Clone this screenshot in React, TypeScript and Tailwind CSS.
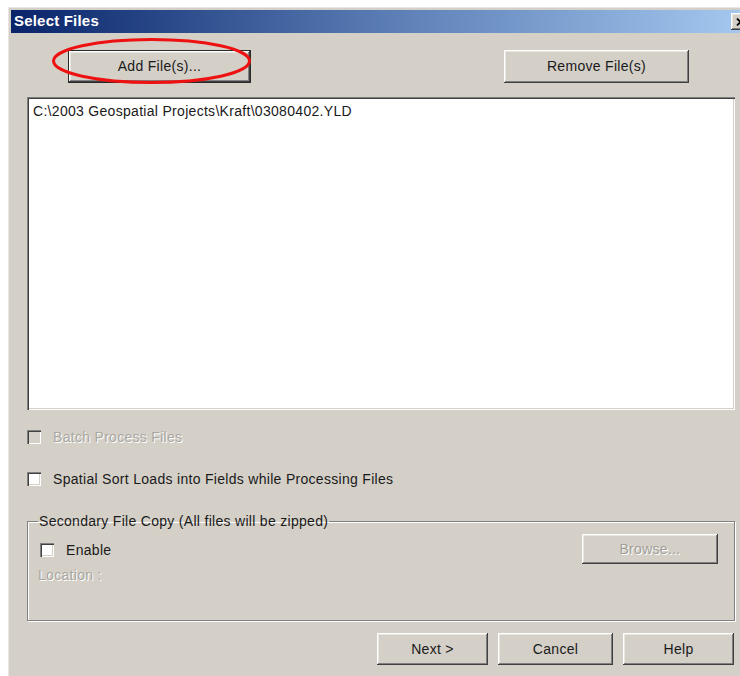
import React from 'react';

const FONT = "font-['Liberation_Sans',Arial,sans-serif]";
const TEXT = 'text-[14px] tracking-[0.3px]';

// classic raised 3D bevel
const RAISED =
  'shadow-[inset_-1px_-1px_#404040,inset_1px_1px_#ffffff,inset_-2px_-2px_#808080,inset_2px_2px_#e8e6e1]';

function Button({
  label,
  className = '',
  disabled = false,
  isDefault = false,
}: {
  label: string;
  className?: string;
  disabled?: boolean;
  isDefault?: boolean;
}) {
  return (
    <div
      className={`flex items-center justify-center bg-[#d4d0c8] ${TEXT} ${
        isDefault ? 'border border-[#2a2a2a]' : ''
      } ${className}`}
    >
      <div
        className={`flex h-full w-full items-center justify-center ${RAISED} ${
          disabled ? 'text-[#a19e98] [text-shadow:1px_1px_0_#ffffff]' : 'text-[#1a1a1a]'
        }`}
      >
        {label}
      </div>
    </div>
  );
}

function Checkbox({ label, disabled = false }: { label: string; disabled?: boolean }) {
  return (
    <div className="flex items-center gap-[12px]">
      <div
        className={`h-[14px] w-[14px] shrink-0 shadow-[inset_1px_1px_#808080,inset_2px_2px_#404040,inset_-1px_-1px_#ffffff,inset_-2px_-2px_#d4d0c8] ${
          disabled ? 'bg-[#d4d0c8]' : 'bg-white'
        }`}
      />
      <span
        className={`${TEXT} leading-none ${
          disabled ? 'text-[#aaa7a1] [text-shadow:1px_1px_0_#ffffff]' : 'text-[#1a1a1a]'
        }`}
      >
        {label}
      </span>
    </div>
  );
}

export default function App() {
  return (
    <div className={`h-[676px] w-[740px] overflow-hidden bg-white pl-[8px] pt-[7px] ${FONT}`}>
      <div className="flex h-[690px] w-[745px] flex-col bg-[#d4d0c8] pl-[3px] pt-[3px] shadow-[inset_1px_1px_#e8e6e1]">
        {/* title bar */}
        <div className="flex h-[23px] items-center justify-between bg-gradient-to-r from-[#0a246a] via-[#5a7cb4] to-[#a6caf0] pl-[3px]">
          <span className="text-[15px] font-bold tracking-[0.2px] text-white">Select Files</span>
          <div className={`mr-[4px] flex h-[17px] w-[18px] items-center justify-center bg-[#d4d0c8] ${RAISED}`}>
            <svg width="9" height="8" viewBox="0 0 9 8">
              <path d="M1 0.5 L8 7.5 M8 0.5 L1 7.5" stroke="#000" strokeWidth="1.8" />
            </svg>
          </div>
        </div>

        <div className="flex flex-col pl-[16px] pr-[13px]">
          {/* add / remove */}
          <div className="mt-[17px] flex h-[33px] items-center">
            <div className="relative ml-[41px] h-[33px] w-[183px]">
              <Button label="Add File(s)..." isDefault className="h-full w-full" />
              <svg
                className="pointer-events-none absolute left-[-17px] top-[-13px]"
                width="201"
                height="50"
                viewBox="0 0 201 50"
              >
                <ellipse cx="100.5" cy="24" rx="98" ry="21.5" fill="none" stroke="#ee1111" strokeWidth="3" />
              </svg>
            </div>
            <Button label="Remove File(s)" className="ml-auto mr-[51px] h-[33px] w-[185px]" />
          </div>

          {/* file list */}
          <div className="mt-[14px] h-[313px] w-[708px] bg-white px-[6px] pt-[7px] shadow-[inset_1px_1px_#808080,inset_2px_2px_#404040,inset_-1px_-1px_#ffffff,inset_-2px_-2px_#d4d0c8]">
            <div className={`${TEXT} leading-none text-[#1a1a1a]`}>
              C:\2003 Geospatial Projects\Kraft\03080402.YLD
            </div>
          </div>

          <div className="mt-[20px]">
            <Checkbox label="Batch Process Files" disabled />
          </div>
          <div className="mt-[28px]">
            <Checkbox label="Spatial Sort Loads into Fields while Processing Files" />
          </div>

          {/* secondary copy group */}
          <fieldset className="mt-[28px] h-[107px] w-[708px] border border-[#808080] pl-[12px] pr-[16px] shadow-[1px_1px_0_#ffffff,inset_1px_1px_0_#ffffff]">
            <legend className={`-ml-[2px] px-[1px] ${TEXT} leading-none text-[#1a1a1a]`}>
              Secondary File Copy (All files will be zipped)
            </legend>
            <div className="mt-[15px] flex items-start justify-between">
              <div className="flex flex-col gap-[11px]">
                <Checkbox label="Enable" />
                <span className={`-ml-[2px] ${TEXT} leading-none text-[#aaa7a1] [text-shadow:1px_1px_0_#ffffff]`}>
                  Location :
                </span>
              </div>
              <Button label="Browse..." disabled className="-mt-[9px] h-[30px] w-[136px]" />
            </div>
          </fieldset>

          {/* footer */}
          <div className="mt-[12px] flex gap-[10px] pl-[350px]">
            <Button label="Next >" className="h-[32px] w-[111px]" />
            <Button label="Cancel" className="h-[32px] w-[115px]" />
            <Button label="Help" className="h-[32px] w-[111px]" />
          </div>
        </div>
      </div>
    </div>
  );
}
